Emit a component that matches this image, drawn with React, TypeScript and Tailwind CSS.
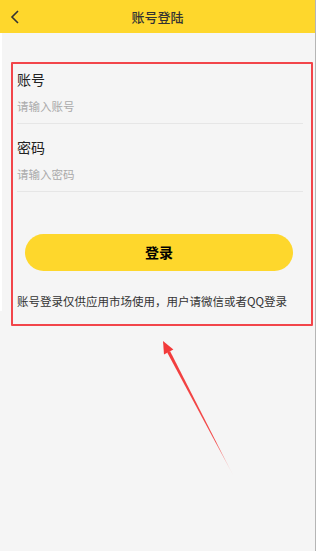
import React from 'react'

const font = { fontFamily: '"Noto Sans CJK SC", "Noto Sans", sans-serif' }

const Field: React.FC<{ label: string; placeholder: string; first?: boolean }> = ({ label, placeholder, first }) => (
  <div className={first ? 'mt-[36px]' : 'mt-[13px]'}>
    <div className="text-[14px] leading-[20px] text-[#222]">{label}</div>
    <div className="mt-[7px] text-[11.5px] leading-[20px] text-[#aaaaaa]">{placeholder}</div>
    <div className="mt-[7px] h-px bg-[#e6e6e6]" />
  </div>
)

export default function App() {
  return (
    <div className="relative w-[320px] h-[553px] bg-white overflow-hidden" style={font}>
      <div className="w-[316px] h-[551px] flex flex-col bg-[#f5f5f5] border-r border-[#b5b5b5]">
        {/* header */}
        <div className="h-[33px] bg-[#fed72c] flex items-center relative shrink-0">
          <svg className="absolute left-[10px] top-[10px]" width="10" height="14" viewBox="0 0 10 14">
            <path d="M8 1 L2 7 L8 13" fill="none" stroke="#333" strokeWidth="1.6" />
          </svg>
          <div className="flex-1 text-center text-[13px] font-medium text-[#333] leading-[33px]">账号登陆</div>
        </div>

        {/* form */}
        <div className="pl-[15px] pr-[12px] border-l-2 border-white">
          <Field first label="账号" placeholder="请输入账号" />
          <Field label="密码" placeholder="请输入密码" />
          <div className="mt-[42px] pl-[8px] pr-[10px]">
            <button className="w-full h-[37px] rounded-full bg-[#fed72c] text-[14px] font-bold text-black">
              登录
            </button>
          </div>
          <div className="mt-[20px] text-[11.5px] leading-[20px] text-[#333] whitespace-nowrap">
            账号登录仅供应用市场使用，用户请微信或者QQ登录
          </div>
        </div>
      </div>

      {/* annotation box */}
      <div className="absolute left-[11px] top-[62px] w-[302px] h-[264px] border-2 border-[#f2454a] rounded-[1px] pointer-events-none" />

      {/* annotation arrow */}
      <svg className="absolute left-0 top-0 pointer-events-none" width="320" height="553" viewBox="0 0 320 553">
        <defs>
          <linearGradient id="fade" x1="163" y1="341" x2="233" y2="475" gradientUnits="userSpaceOnUse">
            <stop offset="0" stopColor="#f23a3a" stopOpacity="1" />
            <stop offset="0.75" stopColor="#f23a3a" stopOpacity="0.9" />
            <stop offset="1" stopColor="#f23a3a" stopOpacity="0.1" />
          </linearGradient>
        </defs>
        <polygon points="163,341 173.4,349.6 164,354.4" fill="#f23a3a" />
        <polygon points="167.2,352.4 170,350.9 233,475" fill="url(#fade)" />
      </svg>
    </div>
  )
}
